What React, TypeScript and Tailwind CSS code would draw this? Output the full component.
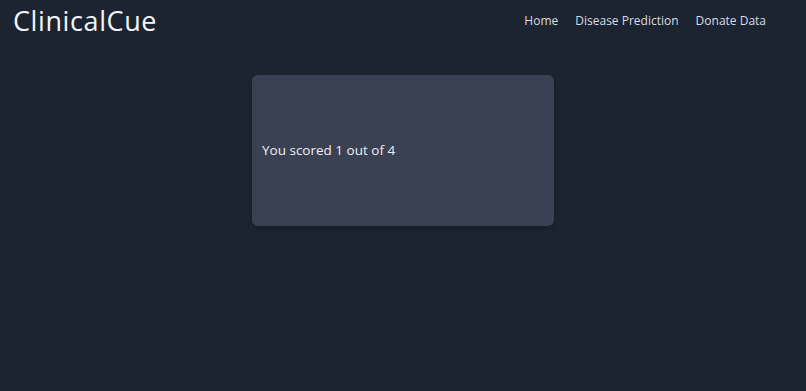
import React from 'react';

const links = ['Home', 'Disease Prediction', 'Donate Data'];

export default function App() {
  const score = 1;
  const total = 4;

  return (
    <div className="min-h-[391px] bg-[#1c2331] text-white font-['Open_Sans',sans-serif]">
      {/* Navbar */}
      <nav className="flex h-[42px] items-center justify-between pl-[13px] pr-[40px]">
        <span className="text-[27px] font-normal tracking-[0.6px] text-[#f3f4f6]">ClinicalCue</span>
        <div className="flex items-center gap-[17px] text-[12px] text-[#d9dce2]">
          {links.map((l) => (
            <a key={l} href="#">
              {l}
            </a>
          ))}
        </div>
      </nav>

      {/* Result card */}
      <div className="flex justify-center pt-[33px]">
        <div className="flex h-[151px] w-[302px] items-center rounded-[6px] bg-[#3a4152] px-[10px] shadow-md">
          <p className="text-[13.5px] text-[#eceef2]">
            You scored {score} out of {total}
          </p>
        </div>
      </div>
    </div>
  );
}
